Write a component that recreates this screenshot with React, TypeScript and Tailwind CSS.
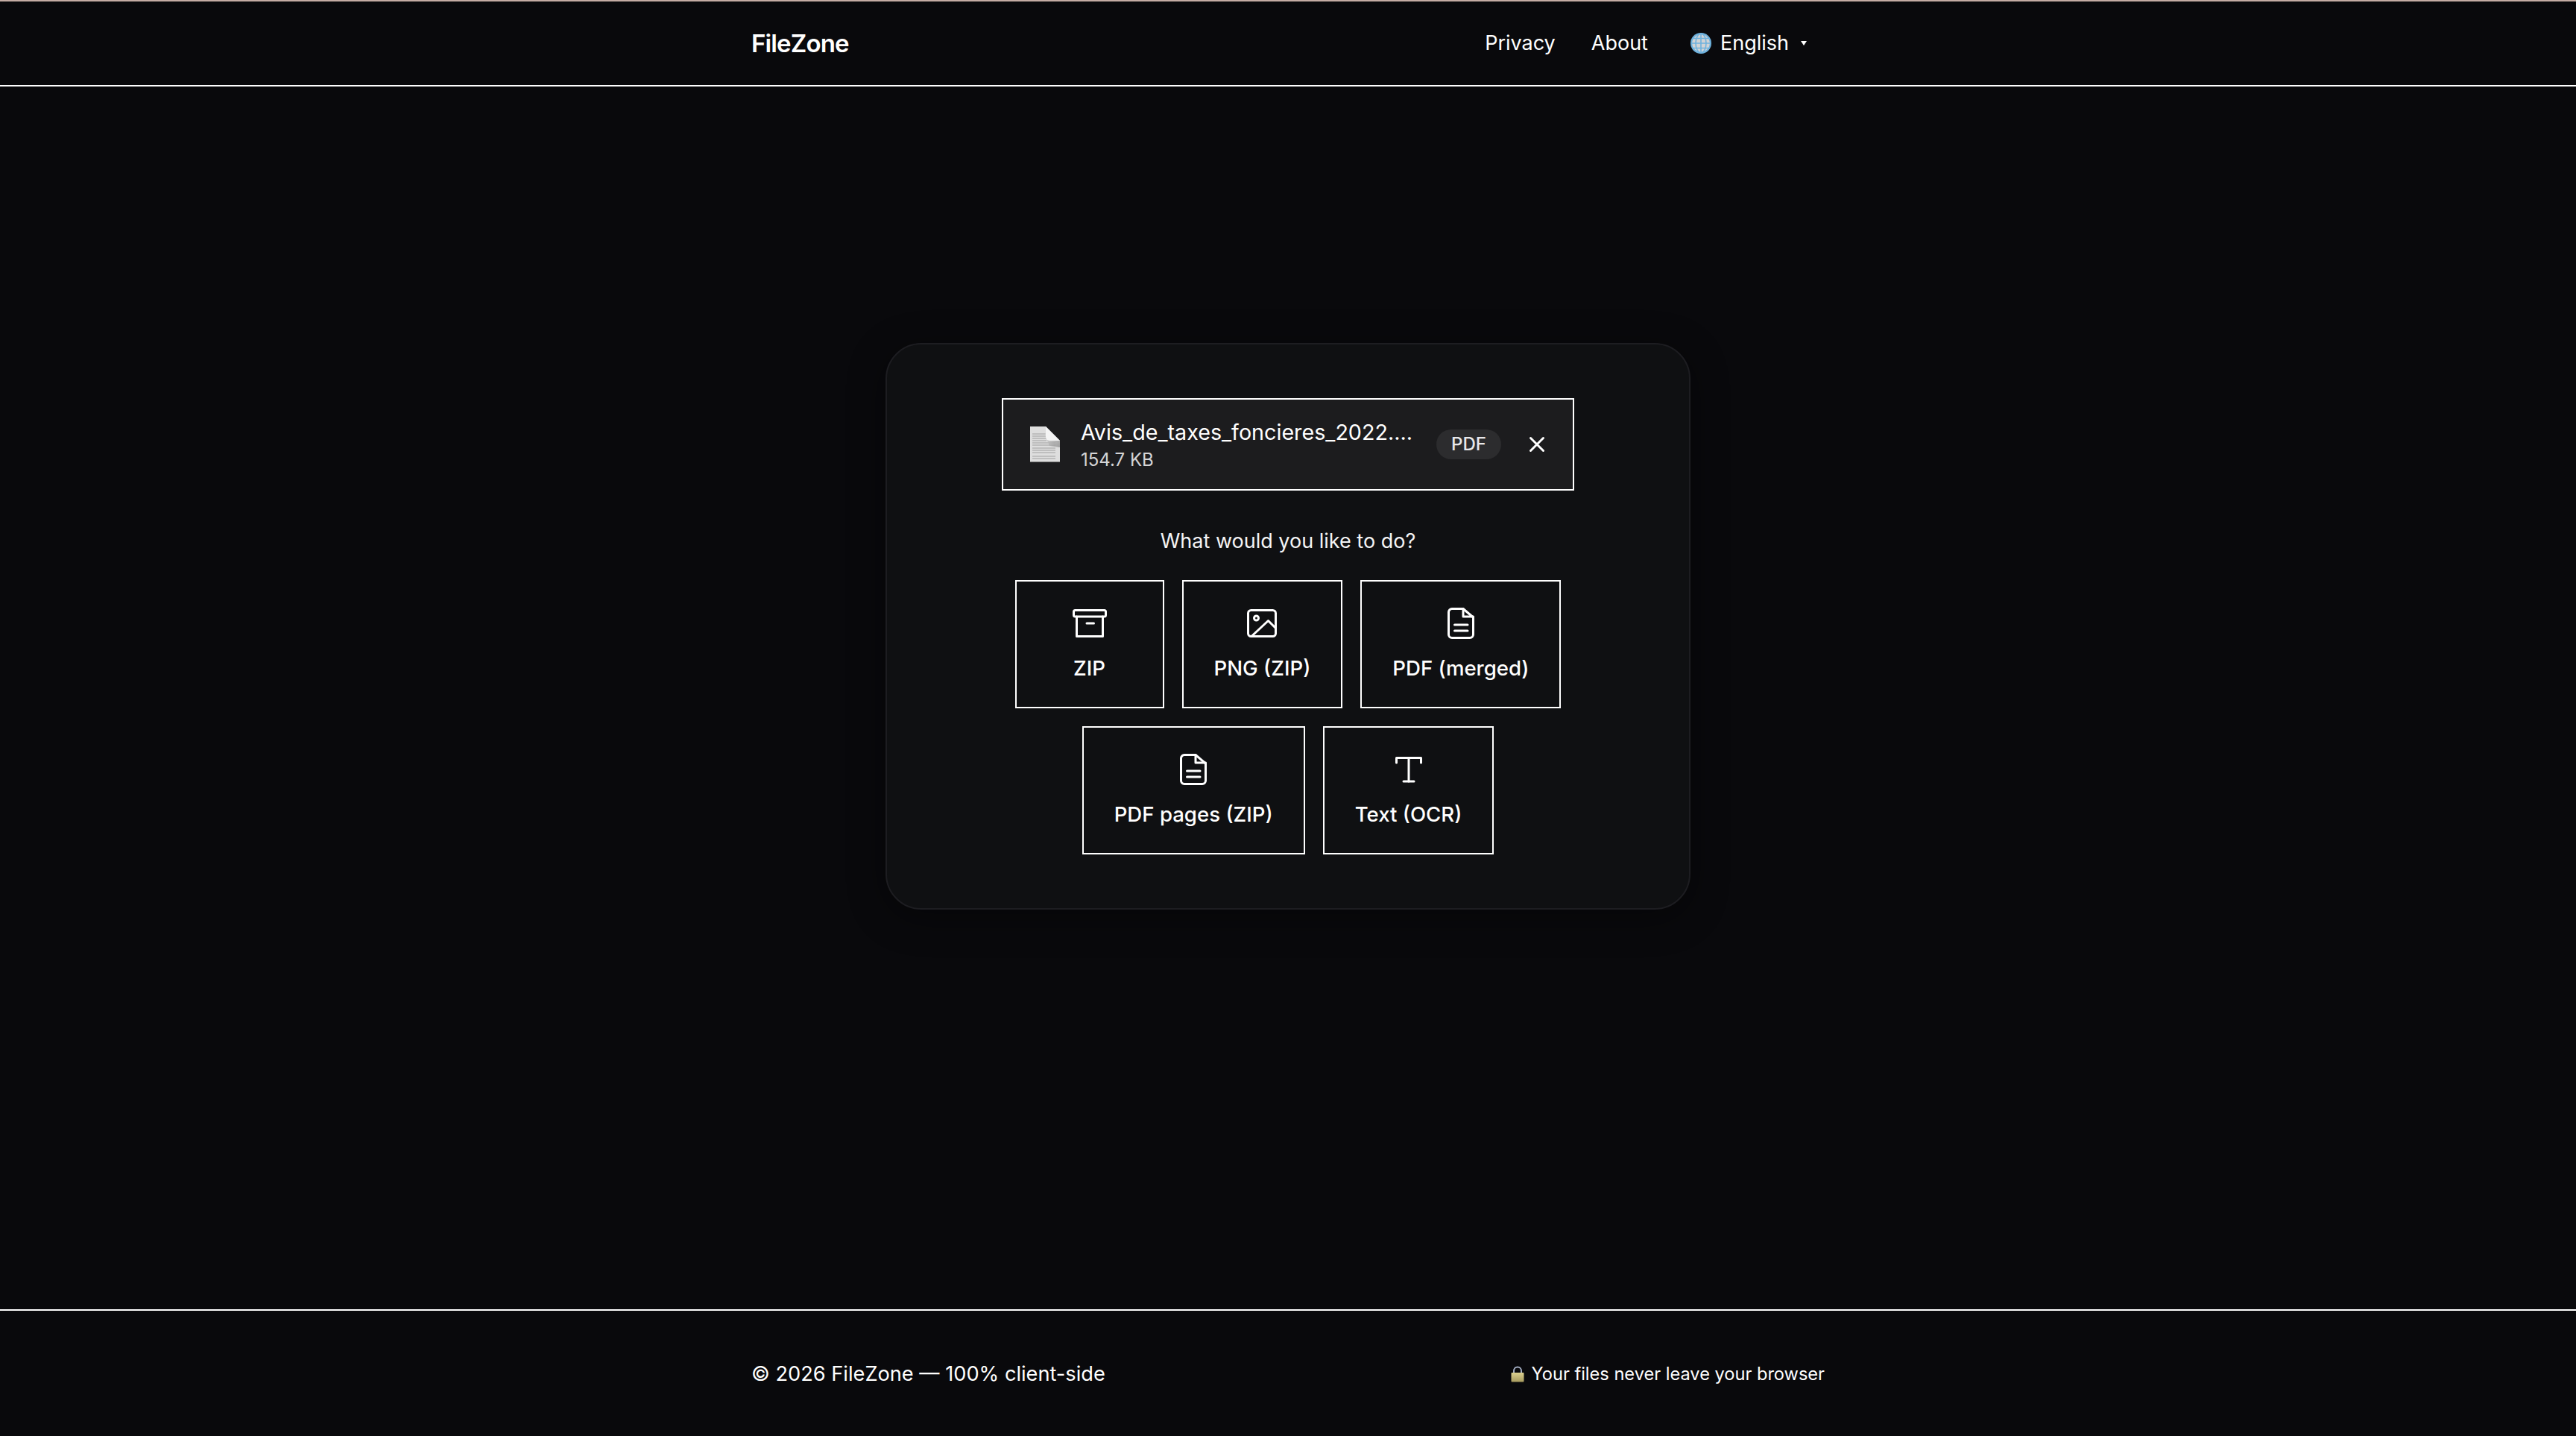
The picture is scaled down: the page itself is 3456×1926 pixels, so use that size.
import type { ReactNode } from "react";

// 操作ボタンのアイコンは全部 24 グリッド、線幅 1.5。
function Stroke({ children }: { children: ReactNode }) {
  return (
    <svg
      viewBox="0 0 24 24"
      fill="none"
      stroke="currentColor"
      strokeWidth={1.5}
      strokeLinecap="round"
      strokeLinejoin="round"
      className="size-12"
    >
      {children}
    </svg>
  );
}

const ArchiveIcon = () => (
  <Stroke>
    <rect x="1.25" y="3.25" width="21.5" height="4.25" rx="1" />
    <path d="M3.25 7.5V20.75H20.75V7.5" />
    <path d="M10 12h4.75" />
  </Stroke>
);

const ImageIcon = () => (
  <Stroke>
    <rect x="2.75" y="3.25" width="18.5" height="17.5" rx="2" />
    <circle cx="8.25" cy="8.5" r="1.5" />
    <path d="M5 20.75 16.25 10.25 21.25 15.25" />
  </Stroke>
);

const DocIcon = () => (
  <Stroke>
    <path d="M13.5 2.25H6A2.25 2.25 0 0 0 3.75 4.5v15A2.25 2.25 0 0 0 6 21.75h12a2.25 2.25 0 0 0 2.25-2.25V8z" />
    <path d="M13.5 2.25V7.5h6.75" />
    <path d="M7.75 13h8.75M7.75 17h8.75" />
  </Stroke>
);

const TextIcon = () => (
  <Stroke>
    <path d="M3.75 7.5V4.25h16.5V7.5" />
    <path d="M12 4.25V20" />
    <path d="M8.5 20h7" />
  </Stroke>
);

function GlobeEmoji() {
  return (
    <svg viewBox="0 0 28 28" className="size-7 shrink-0">
      <circle cx="14" cy="14" r="14" fill="#6eb2de" />
      <circle cx="14" cy="14" r="11.8" fill="#d2d3d5" />
      <g fill="none" stroke="#6eb2de" strokeWidth="1.6">
        <path d="M14 1v26" />
        <ellipse cx="14" cy="14" rx="7" ry="13" />
        <path d="M1.5 14h25M3.5 7.5h21M3.5 20.5h21" />
      </g>
    </svg>
  );
}

function LockEmoji() {
  return (
    <svg viewBox="0 0 18 22" className="h-[22px] w-[18px] shrink-0">
      <defs>
        <linearGradient id="lock-body" x1="0" y1="0" x2="0" y2="1">
          <stop offset="0" stopColor="#dcd190" />
          <stop offset="1" stopColor="#a69a5e" />
        </linearGradient>
      </defs>
      <path d="M4 10V6.5a5 5 0 0 1 10 0V10" fill="none" stroke="#a3adc2" strokeWidth="2" />
      <rect x="0.5" y="9" width="17" height="12.5" rx="1" fill="url(#lock-body)" />
    </svg>
  );
}

// ファイルのサムネイル。小さく潰れた書類プレビューなので線は雰囲気だけ。
function FileThumb() {
  const lines = [10, 13, 16, 19, 22, 25, 29, 32, 35, 40, 43];
  return (
    <svg viewBox="0 0 48 48" className="size-12 shrink-0">
      <defs>
        <linearGradient id="fold-shadow" x1="0" y1="0" x2="1" y2="1">
          <stop offset="0" stopColor="#e2e2e2" />
          <stop offset="1" stopColor="#8a8a8a" />
        </linearGradient>
      </defs>
      <path d="M4 0H25L44 19V47.5H4z" fill="#dedede" />
      {lines.map((y) => (
        <path key={y} d={`M7 ${y}H${y < 20 ? 26 : 38}`} stroke="#a9a9a9" strokeWidth="1.2" />
      ))}
      <path d="M25 6 32 18 44 19 44 28 30 26 24 12z" fill="url(#fold-shadow)" opacity="0.75" />
      <path d="M25 0 44 19H30a5 5 0 0 1-5-5z" fill="#f4f4f4" />
    </svg>
  );
}

function ActionButton({ icon, label }: { icon: ReactNode; label: string }) {
  return (
    <button className="flex h-[172px] min-w-[200px] flex-col items-center gap-4 border-2 border-white px-[41px] pt-8 text-[27.6px] leading-10 font-medium text-white">
      {icon}
      {label}
    </button>
  );
}

export default function App() {
  return (
    <div className="flex min-h-[1926px] flex-col border-t-2 border-[#c4aca4] bg-[#09090c] font-['Inter',sans-serif] text-white">
      <header className="h-[114px] shrink-0 border-b-2 border-white">
        <div className="mx-auto flex h-full w-[1440px] items-center justify-between">
          <span className="mt-[2px] text-[33px] font-semibold tracking-[-0.85px]">FileZone</span>
          <nav className="flex items-center text-[27px]">
            <a>Privacy</a>
            <a className="ml-12">About</a>
            <div className="ml-[57px] flex items-center pr-6">
              <GlobeEmoji />
              <span className="ml-3">English</span>
              <span className="ml-4 h-0 w-0 border-x-[4px] border-t-[6px] border-x-transparent border-t-white" />
            </div>
          </nav>
        </div>
      </header>

      <main className="flex flex-1 justify-center pt-[344px]">
        <section className="flex h-[760px] w-[1080px] flex-col items-center rounded-[48px] border-2 border-[#1d1d21] bg-[#0f1012] pt-[72px] shadow-[0_10px_50px_rgba(0,0,0,0.4)]">
          <div className="flex h-[124px] w-[768px] items-center border-2 border-white bg-[#1c1c1e] pr-[34px] pl-8">
            <FileThumb />
            <div className="ml-6 w-[444px] pt-[1px]">
              <p className="text-[28.7px] leading-10 whitespace-nowrap">Avis_de_taxes_foncieres_2022.…</p>
              <p className="mt-[1px] text-2xl leading-8 text-[#d4d4d6]">154.7 KB</p>
            </div>
            <span className="ml-[33px] flex h-10 w-[87px] items-center justify-center rounded-full bg-[#2c2c2e] text-2xl font-medium text-[#e8e8ea]">
              PDF
            </span>
            <svg viewBox="0 0 24 24" className="ml-9 size-6" fill="none" stroke="white" strokeWidth={3} strokeLinecap="round">
              <path d="M3.5 3.5 20.5 20.5M20.5 3.5 3.5 20.5" />
            </svg>
          </div>

          <p className="mt-12 text-center text-[27px] leading-10 text-[#f4f4f5]">What would you like to do?</p>

          <div className="mt-8 flex w-[768px] flex-wrap justify-center gap-6">
            <ActionButton icon={<ArchiveIcon />} label="ZIP" />
            <ActionButton icon={<ImageIcon />} label="PNG (ZIP)" />
            <ActionButton icon={<DocIcon />} label="PDF (merged)" />
            <ActionButton icon={<DocIcon />} label="PDF pages (ZIP)" />
            <ActionButton icon={<TextIcon />} label="Text (OCR)" />
          </div>
        </section>
      </main>

      <footer className="h-[170px] shrink-0 border-t-2 border-white">
        <div className="mx-auto flex h-full w-[1440px] items-center justify-between pt-[2px]">
          <span className="text-[27.2px]">© 2026 FileZone — 100% client-side</span>
          <span className="flex items-center gap-[10px] text-[23.6px]">
            <LockEmoji />
            Your files never leave your browser
          </span>
        </div>
      </footer>
    </div>
  );
}
